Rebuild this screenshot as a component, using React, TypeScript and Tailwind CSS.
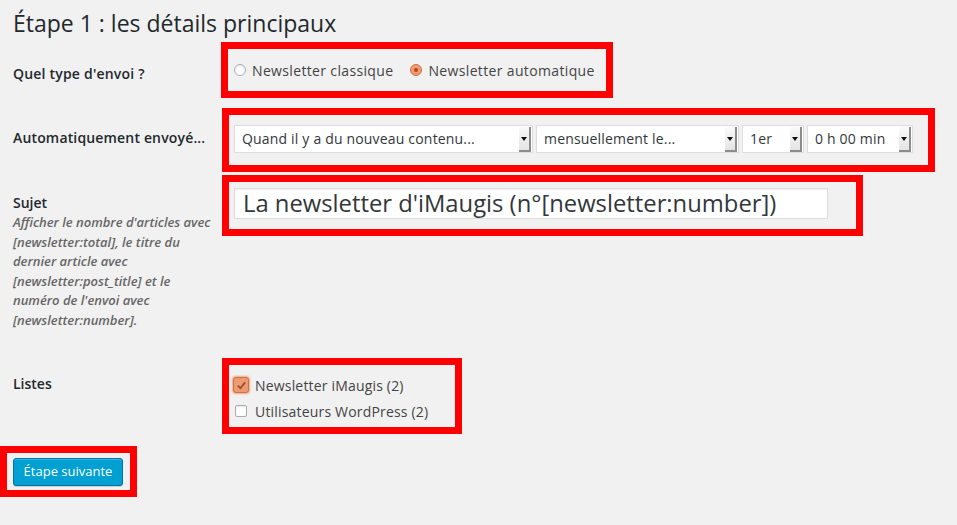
import type { ReactNode } from "react";

const FONT = { fontFamily: '"Open Sans", "Liberation Sans", sans-serif' };

function RedBox({ className, children }: { className: string; children: ReactNode }) {
  return <div className={`border-[7px] border-[#ff0000] ${className}`}>{children}</div>;
}

function Select({ label, width }: { label: string; width: string }) {
  return (
    <div className={`flex h-[28px] items-center border border-[#dddddd] bg-white ${width}`}>
      <span className="flex-1 whitespace-nowrap pl-[7px] text-[14px] leading-none tracking-[0.18px] text-[#32373c]">
        {label}
      </span>
      <div className="mr-px flex h-[25px] w-[12px] items-center justify-center border-b-2 border-r-2 border-[#8c8c8c] bg-gradient-to-b from-[#fafafa] to-[#e4e4e4]">
        <span className="mt-px h-0 w-0 border-x-[3px] border-t-[4px] border-x-transparent border-t-[#111]" />
      </div>
    </div>
  );
}

function Radio({ checked }: { checked?: boolean }) {
  if (checked) {
    return (
      <span className="flex h-[12px] w-[12px] items-center justify-center rounded-full border border-[#d46a40] bg-[#f29b74]">
        <span className="h-[4px] w-[4px] rounded-full bg-[#b2441c]" />
      </span>
    );
  }
  return <span className="h-[12px] w-[12px] rounded-full border border-[#a8adb2] bg-white shadow-[inset_0_1px_2px_rgba(0,0,0,0.1)]" />;
}

export default function App() {
  return (
    <div className="min-h-[525px] w-full bg-[#f1f1f1] pb-8 text-[#444]" style={FONT}>
      <h1 className="pl-[13px] pt-[9px] text-[23px] leading-[29px] font-normal text-[#23282d]">
        Étape 1 : les détails principaux
      </h1>

      {/* Type d'envoi */}
      <div className="mt-[4px] flex items-start">
        <div className="w-[221px] pl-[13px] pt-[22px] text-[14px] leading-[20px] font-semibold tracking-[0.2px] text-[#23282d]">
          Quel type d'envoi ?
        </div>
        <RedBox className="h-[56px] w-[392px]">
          <div className="flex h-full items-center pl-[6px] text-[14px] tracking-[0.35px] text-[#444]">
            <label className="flex items-center gap-[6px]">
              <Radio />
              Newsletter classique
            </label>
            <label className="ml-[17px] flex items-center gap-[6px]">
              <Radio checked />
              Newsletter automatique
            </label>
          </div>
        </RedBox>
      </div>

      {/* Envoi automatique */}
      <div className="mt-[10px] flex items-start">
        <div className="w-[222px] pl-[13px] pt-[20px] text-[14px] leading-[20px] font-semibold tracking-[0.16px] text-[#23282d]">
          Automatiquement envoyé...
        </div>
        <RedBox className="h-[64px] w-[713px]">
          <div className="flex gap-[3px] pl-[5px] pt-[10px]">
            <Select label="Quand il y a du nouveau contenu..." width="w-[299px]" />
            <Select label="mensuellement le..." width="w-[203px]" />
            <Select label="1er" width="w-[62px]" />
            <Select label="0 h 00 min" width="w-[106px]" />
          </div>
        </RedBox>
      </div>

      {/* Sujet */}
      <div className="mt-[3px] flex items-start">
        <div className="w-[222px] pl-[13px] pt-[18px]">
          <div className="text-[14px] leading-[20px] font-semibold text-[#23282d]">Sujet</div>
          <p className="text-[13px] leading-[19.5px] italic font-semibold text-[#666]">
            <span className="block whitespace-nowrap">Afficher le nombre d'articles avec</span>
            <span className="block whitespace-nowrap">[newsletter:total], le titre du</span>
            <span className="block whitespace-nowrap">dernier article avec</span>
            <span className="block whitespace-nowrap">[newsletter:post_title] et le</span>
            <span className="block whitespace-nowrap">numéro de l'envoi avec</span>
            <span className="block whitespace-nowrap">[newsletter:number].</span>
          </p>
        </div>
        <RedBox className="h-[61px] w-[641px]">
          <div className="pl-[5px] pt-[6px]">
            <div className="flex h-[31px] w-[594px] items-center border border-[#dddddd] bg-white pl-[8px] text-[23.8px] leading-none text-[#32373c] shadow-[inset_0_1px_2px_rgba(0,0,0,0.07)]">
              La newsletter d'iMaugis (n°[newsletter:number])
            </div>
          </div>
        </RedBox>
      </div>

      {/* Listes */}
      <div className="mt-[28px] flex items-start">
        <div className="w-[222px] pl-[13px] pt-[16px] text-[14px] leading-[20px] font-semibold text-[#23282d]">
          Listes
        </div>
        <RedBox className="h-[76px] w-[240px]">
          <div className="flex flex-col pl-[4px] pt-[12px] text-[14px] tracking-[0.18px] text-[#444]">
            <label className="flex h-[16px] items-center gap-[6px]">
              <span className="flex h-[16px] w-[16px] items-center justify-center rounded-[3px] border border-[#d3703f] bg-[#eb9a74] shadow-[0_0_2px_1px_rgba(222,120,70,0.6)]">
                <svg viewBox="0 0 12 12" className="h-[11px] w-[11px]">
                  <path d="M2 6.2 L4.8 9 L10 2.6" fill="none" stroke="#9c4a26" strokeWidth="1.8" />
                </svg>
              </span>
              Newsletter iMaugis (2)
            </label>
            <label className="mt-[10px] flex h-[16px] items-center gap-[8px] pl-[2px]">
              <span className="h-[12px] w-[12px] rounded-[2px] border border-[#a8adb2] bg-white shadow-[inset_0_1px_2px_rgba(0,0,0,0.1)]" />
              Utilisateurs WordPress (2)
            </label>
          </div>
        </RedBox>
      </div>

      {/* Bouton */}
      <RedBox className="mt-[12px] h-[51px] w-[137px]">
        <div className="pl-[6px] pt-[5px]">
          <button className="h-[28px] w-[110px] rounded-[3px] border border-[#0073aa] bg-[#00a0d2] text-[13px] text-white shadow-[inset_0_1px_0_rgba(120,200,230,0.5),0_1px_0_rgba(0,0,0,0.15)]">
            Étape suivante
          </button>
        </div>
      </RedBox>
    </div>
  );
}
